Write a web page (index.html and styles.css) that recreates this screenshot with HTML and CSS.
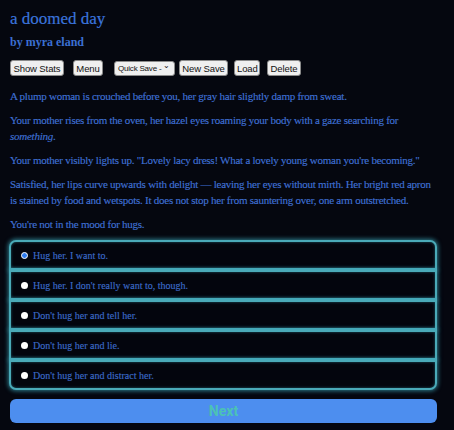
FILE: index.html
```html
<!DOCTYPE html>
<html>
<head>
<meta charset="utf-8">
<link rel="stylesheet" href="styles.css">
</head>
<body>
<div class="page">
  <h1 class="title">a doomed day</h1>
  <div class="byline">by myra eland</div>
  <div class="toolbar">
    <button class="btn btn-stats">Show Stats</button>
    <button class="btn btn-menu">Menu</button>
    <span class="select">Quick Save - <span class="chev">&#8964;</span></span>
    <button class="btn btn-new">New Save</button>
    <button class="btn btn-load">Load</button>
    <button class="btn btn-del">Delete</button>
  </div>
  <div class="story">
    <p>A plump woman is crouched before you, her gray hair slightly damp from sweat.</p>
    <p>Your mother rises from the oven, her hazel eyes roaming your body with a gaze searching for <em>something</em>.</p>
    <p>Your mother visibly lights up. "Lovely lacy dress! What a lovely young woman you're becoming."</p>
    <p>Satisfied, her lips curve upwards with delight — leaving her eyes without mirth. Her bright red apron is stained by food and wetspots. It does not stop her from sauntering over, one arm outstretched.</p>
    <p>You're not in the mood for hugs.</p>
  </div>
  <div class="choices">
    <div class="choice"><span class="radio checked"></span><span class="label">Hug her. I want to.</span></div>
    <div class="choice"><span class="radio"></span><span class="label">Hug her. I don't really want to, though.</span></div>
    <div class="choice"><span class="radio"></span><span class="label">Don't hug her and tell her.</span></div>
    <div class="choice"><span class="radio"></span><span class="label">Don't hug her and lie.</span></div>
    <div class="choice"><span class="radio"></span><span class="label">Don't hug her and distract her.</span></div>
  </div>
  <button class="next">Next</button>
</div>
</body>
</html>
```
FILE: styles.css
```css
html, body {
  margin: 0;
  padding: 0;
  background: #05070f;
}
body {
  font-family: "Liberation Serif", "Times New Roman", serif;
  color: #3f70d4;
}
.page {
  width: 428px;
  padding: 8px 0 0 10px;
}
.title {
  margin: 0;
  font-size: 17px;
  line-height: 22px;
  font-weight: normal;
  color: #3b74dc;
  -webkit-text-stroke: 0.2px #3b74dc;
}
.byline {
  margin-top: 4px;
  font-size: 12px;
  line-height: 16px;
  font-weight: bold;
  color: #3b6fd2;
}
.toolbar {
  margin-top: 10px;
  display: flex;
  align-items: center;
  height: 16px;
}
.btn, .select {
  font-family: "Liberation Sans", Arial, sans-serif;
  font-size: 9.5px;
  letter-spacing: -0.1px;
  height: 16px;
  line-height: 13px;
  padding: 0 2px;
  margin: 0;
  background: #efefef;
  color: #111;
  border: 1px solid #8a8a8a;
  border-radius: 3px;
  box-sizing: border-box;
  white-space: nowrap;
}
.btn-stats { width: 54px; margin-right: 9px; }
.btn-menu { width: 30px; margin-right: 11px; }
.select {
  font-size: 8px;
  display: inline-flex;
  align-items: center;
  width: 61px;
  padding: 0 3px;
  margin-right: 4px;
  height: 15px;
  letter-spacing: -0.2px;
}
.chev { font-size: 8px; margin-left: 2px; line-height: 8px; position: relative; top: -2px; }
.btn-new { width: 49px; margin-right: 6px; }
.btn-load { width: 26px; margin-right: 7px; }
.btn-del { width: 34px; }
.story {
  margin-top: 12px;
  font-size: 11px;
  line-height: 16px;
  letter-spacing: -0.25px;
  -webkit-text-stroke: 0.15px #3f70d4;
}
.story p {
  margin: 0 0 8px 0;
}
.choices {
  display: flex;
  flex-direction: column;
  width: 428px;
  box-sizing: border-box;
  margin-left: -1px;
}
.choice {
  height: 30px;
  box-sizing: border-box;
  border: 2px solid #4aaab8;
  box-shadow: 0 0 4px 1px rgba(60, 170, 190, 0.7), inset 0 0 3px rgba(60, 170, 190, 0.5);
  display: flex;
  align-items: center;
  padding-left: 10px;
  background: #03050d;
  font-size: 10px;
  color: #3b6ac8;
  -webkit-text-stroke: 0.15px #3b6ac8;
}
.choice:first-child { border-radius: 7px 7px 0 0; }
.choice:last-child { border-radius: 0 0 7px 7px; }
.radio {
  width: 7px;
  height: 7px;
  border-radius: 50%;
  background: #ffffff;
  margin-right: 5px;
  flex: none;
  box-sizing: border-box;
}
.radio.checked {
  background: #2f7cf0;
  border: 1.5px solid #ffffff;
}
.next {
  display: block;
  margin-top: 9px;
  width: 427px;
  height: 24px;
  border: none;
  border-radius: 6px;
  background: #4d8eef;
  color: #4cc2b4;
  font-family: Roboto, "Liberation Sans", sans-serif;
  font-weight: bold;
  font-size: 14px;
  padding: 0;
}
```
